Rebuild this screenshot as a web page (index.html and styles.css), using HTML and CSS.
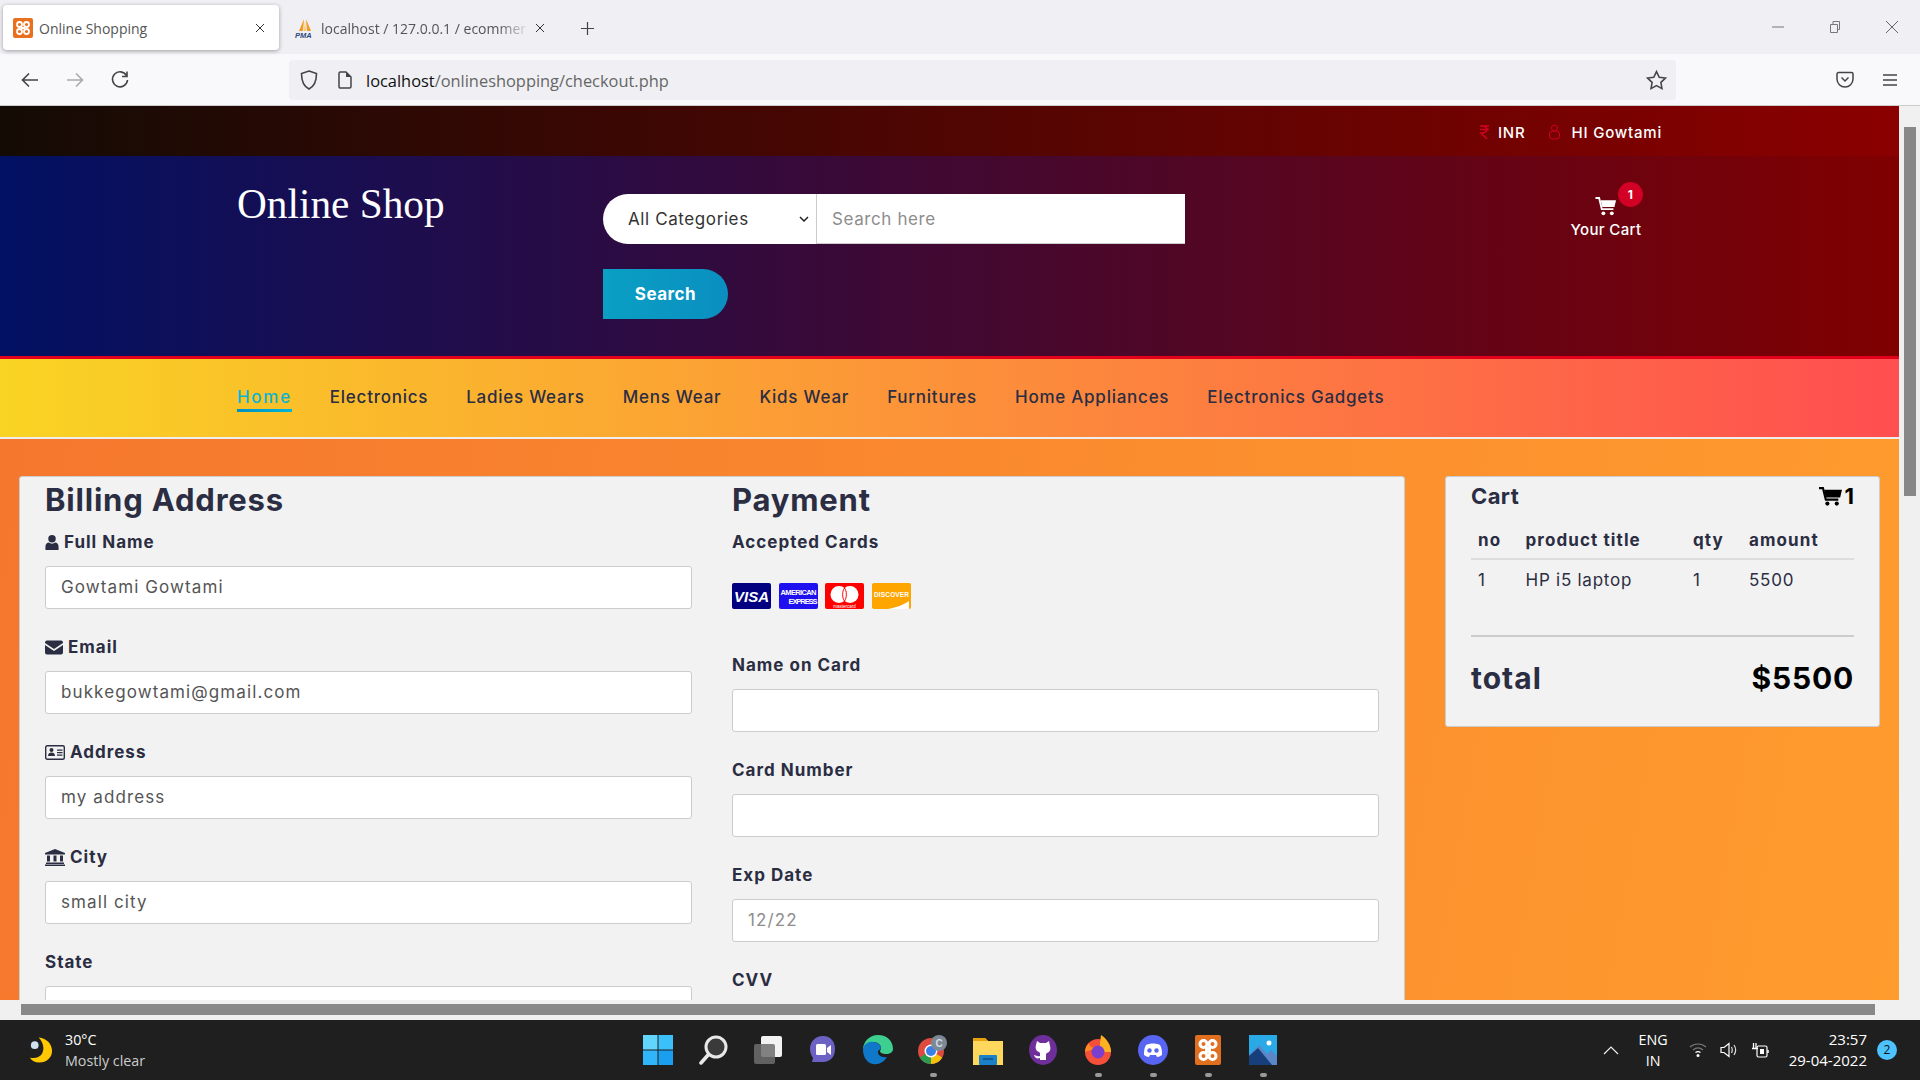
FILE: index.html
```html
<!DOCTYPE html>
<html lang="en">
<head>
  <meta charset="UTF-8">
  <title>Online Shopping</title>
  <link rel="stylesheet" href="styles.css">
</head>
<body>
  <div class="tabstrip">
    <div class="tab tab-active">
      <svg class="favicon" viewBox="0 0 20 20"><rect width="20" height="20" rx="2" fill="#e8701f"/><g fill="none" stroke="#fff" stroke-width="1.800"><circle cx="6.500" cy="6.500" r="2.500"/><circle cx="13.500" cy="6.500" r="2.500"/><circle cx="6.500" cy="13.500" r="2.500"/><circle cx="13.500" cy="13.500" r="2.500"/></g><path d="M8 9h4v2H8z" fill="#fff"/></svg>
      <span class="tab-title">Online Shopping</span>
      <svg class="tab-close" viewBox="0 0 10 10"><path d="M1 1l8 8M9 1l-8 8" stroke="#333" fill="none"/></svg>
    </div>
    <div class="tab tab-other">
      <svg class="favicon" viewBox="0 0 20 20"><path d="M9 1L4 13h4zM11 1l5 12h-4z" fill="#f29a1f"/><path d="M10 3l-1 10h2z" fill="#f7c66b"/><text x="0" y="19.500" font-size="7.500" font-weight="700" font-style="italic" fill="#2b4a80" font-family="Liberation Sans">PMA</text></svg>
      <span class="tab-title tab-fade">localhost / 127.0.0.1 / ecommer</span>
      <svg class="tab-close" viewBox="0 0 10 10"><path d="M1 1l8 8M9 1l-8 8" stroke="#333" fill="none"/></svg>
    </div>
    <svg class="new-tab" viewBox="0 0 16 16"><path d="M8 1v14M1 8h14" stroke="#444" stroke-width="1.300" fill="none"/></svg>
    <div class="window-controls">
      <svg viewBox="0 0 12 12"><path d="M0 6h12" stroke="#777"/></svg>
      <svg viewBox="0 0 12 12"><path d="M1.500 3.500h7v8h-7zM4 3.500V.5h6.500v8H8.500" stroke="#777" fill="none"/></svg>
      <svg viewBox="0 0 12 12"><path d="M0 0l12 12M12 0L0 12" stroke="#666" fill="none"/></svg>
    </div>
  </div>

  <div class="toolbar">
    <svg class="nav-btn" viewBox="0 0 20 20"><path d="M18 10H3M9 3.500L2.500 10 9 16.500" stroke="#444" stroke-width="1.600" fill="none"/></svg>
    <svg class="nav-btn nav-fwd" viewBox="0 0 20 20"><path d="M2 10h15M11 3.500l6.500 6.500-6.500 6.500" stroke="#aaa" stroke-width="1.600" fill="none"/></svg>
    <svg class="nav-btn" viewBox="0 0 20 20"><path d="M16.500 5.500A7.500 7.500 0 1 0 17.500 10M17 1.500V6.500H12" stroke="#444" stroke-width="1.600" fill="none"/></svg>
    <div class="urlbar">
      <svg class="url-shield" viewBox="0 0 18 20"><path d="M9 1l7.500 2.500C16.500 11 15 16 9 19 3 16 1.500 11 1.500 3.500z" stroke="#444" stroke-width="1.600" fill="none"/></svg>
      <svg class="url-doc" viewBox="0 0 14 18"><path d="M2 1h6l5 5v9.500a1.500 1.500 0 0 1-1.500 1.500h-9.500A1.500 1.500 0 0 1 1 15.500V2z" stroke="#444" stroke-width="1.500" fill="none"/><path d="M8 1v5h5" fill="#444"/></svg>
      <span class="url-text"><b>localhost</b>/onlineshopping/checkout.php</span>
      <svg class="url-star" viewBox="0 0 20 20"><path d="M10 1.500l2.600 5.400 5.900.8-4.300 4.100 1 5.900L10 14.900l-5.200 2.800 1-5.900L1.500 7.700l5.900-.8z" stroke="#444" stroke-width="1.500" fill="none"/></svg>
    </div>
    <svg class="tool-pocket" viewBox="0 0 18 18"><path d="M1 3a1.500 1.500 0 0 1 1.500-1.500h13A1.500 1.500 0 0 1 17 3v5a8 8 0 0 1-16 0z" stroke="#444" stroke-width="1.500" fill="none"/><path d="M5.500 6.500L9 10l3.500-3.500" stroke="#444" stroke-width="1.500" fill="none"/></svg>
    <svg class="tool-menu" viewBox="0 0 16 14"><path d="M1 2h14M1 7h14M1 12h14" stroke="#444" stroke-width="1.500"/></svg>
  </div>

  <div class="viewport">
    <div class="page-wrap">
      <div class="page">
        <div class="top-bar">
          <span class="top-link">
            <svg class="top-rupee" viewBox="0 0 9 14"><path d="M0 1h9M0 4.500h9M1 1c5 0 6 2 6 3.500S5 8 1 8l6 6" stroke="#d10024" stroke-width="1.600" fill="none"/></svg>
            INR
          </span>
          <span class="top-link">
            <svg class="top-user" viewBox="0 0 12 16"><circle cx="6" cy="4" r="3" stroke="#d10024" fill="none"/><rect x="1" y="7" width="10" height="8" rx="3" stroke="#d10024" fill="none"/></svg>
            HI Gowtami
          </span>
        </div>

        <header class="header">
          <div class="logo">Online Shop</div>
          <form class="search">
            <div class="search-row">
              <div class="search-select">All Categories
                <svg viewBox="0 0 10 6"><path d="M1 1l4 4 4-4" stroke="#222" stroke-width="1.500" fill="none"/></svg>
              </div>
              <div class="search-input">Search here</div>
            </div>
            <div class="search-btn">Search</div>
          </form>
          <div class="your-cart">
            <svg class="your-cart-icon" viewBox="0 0 20 18"><path d="M0 1h3.500l2.500 10.500h11" stroke="#fff" stroke-width="1.800" fill="none"/><path d="M5 3h14.500l-1.500 6.500H6.500z" fill="#fff"/><circle cx="7.500" cy="15.500" r="1.800" fill="#fff"/><circle cx="15.500" cy="15.500" r="1.800" fill="#fff"/></svg>
            <span class="badge">1</span>
            <div>Your Cart</div>
          </div>
        </header>

        <nav class="nav">
          <a class="nav-item nav-active">Home</a>
          <a class="nav-item">Electronics</a>
          <a class="nav-item">Ladies Wears</a>
          <a class="nav-item">Mens Wear</a>
          <a class="nav-item">Kids Wear</a>
          <a class="nav-item">Furnitures</a>
          <a class="nav-item">Home Appliances</a>
          <a class="nav-item">Electronics Gadgets</a>
        </nav>

        <main class="checkout">
          <section class="card billing">
            <div class="col">
              <h3>Billing Address</h3>
              <div class="field">
                <label><svg class="fa fa-user" viewBox="0 0 14 16"><circle cx="7" cy="4" r="4"/><path d="M0 16v-3.500C0 9.500 2 8 3.500 8c1 .8 2.200 1.200 3.500 1.200S9.500 8.800 10.500 8C12 8 14 9.500 14 12.500V16z"/></svg>Full Name</label>
                <div class="input">Gowtami Gowtami</div>
              </div>
              <div class="field">
                <label><svg class="fa fa-mail" viewBox="0 0 18 14"><path d="M0 2a2 2 0 0 1 2-2h14a2 2 0 0 1 2 2v.5L9 8.500 0 2.500z"/><path d="M0 4.500l9 6 9-6V12a2 2 0 0 1-2 2H2a2 2 0 0 1-2-2z"/></svg>Email</label>
                <div class="input">bukkegowtami@gmail.com</div>
              </div>
              <div class="field">
                <label><svg class="fa fa-wide" viewBox="0 0 20 15"><rect x=".7" y=".7" width="18.600" height="13.600" rx="1.500" fill="none" stroke="#2b2d42" stroke-width="1.400"/><circle cx="6.500" cy="5" r="2"/><path d="M3 11c0-2.500 1.500-3.500 3.500-3.500S10 8.500 10 11zM12 4.500h5.500v1.300H12zM12 7h5.500v1.300H12zM12 9.500h5.500v1.300H12z"/></svg>Address</label>
                <div class="input">my address</div>
              </div>
              <div class="field">
                <label><svg class="fa fa-wide fa-tall" viewBox="0 0 20 17"><path d="M10 0l10 4v1.500H0V4zM2 6.500h3v6H2zM8.500 6.500h3v6h-3zM15 6.500h3v6h-3zM1 13.500h18V15H1zM0 15.500h20V17H0z"/></svg>City</label>
                <div class="input">small city</div>
              </div>
              <div class="field">
                <label>State</label>
                <div class="input"></div>
              </div>
            </div>

            <div class="col">
              <h3>Payment</h3>
              <div class="field field-cards">
                <label>Accepted Cards</label>
                <div class="pay-cards">
                  <svg viewBox="0 0 39 26"><rect width="39" height="26" rx="2" fill="#000080"/><text x="19.500" y="18.500" text-anchor="middle" font-size="15" font-weight="700" font-style="italic" fill="#fff" font-family="Liberation Sans">VISA</text></svg>
                  <svg viewBox="0 0 39 26"><rect width="39" height="26" rx="2" fill="#1f10f0"/><text x="19.500" y="12" text-anchor="middle" font-size="7.500" font-weight="700" fill="#fff" font-family="Liberation Sans" textLength="36">AMERICAN</text><text x="24" y="20.500" text-anchor="middle" font-size="7.500" font-weight="700" fill="#fff" font-family="Liberation Sans" textLength="29">EXPRESS</text></svg>
                  <svg viewBox="0 0 39 26"><rect width="39" height="26" rx="2" fill="#f00"/><circle cx="14" cy="11.500" r="8.500" fill="#fff"/><circle cx="25" cy="11.500" r="8.500" fill="#fff"/><path d="M19.500 5c2.500 3 2.500 10 0 13-2.500-3-2.500-10 0-13z" fill="none" stroke="#f00"/><text x="19.500" y="24.500" text-anchor="middle" font-size="4.500" fill="#fff" font-family="Liberation Sans">mastercard</text></svg>
                  <svg viewBox="0 0 39 26"><rect width="39" height="26" rx="2" fill="#ffa500"/><path d="M16 26c10-2 17-5 21-8v8z" fill="#fff"/><text x="19.500" y="14" text-anchor="middle" font-size="6.500" fill="#fff" font-weight="700" font-family="Liberation Sans" textLength="35">DISCOVER</text></svg>
                </div>
              </div>
              <div class="field">
                <label>Name on Card</label>
                <div class="input"></div>
              </div>
              <div class="field">
                <label>Card Number</label>
                <div class="input"></div>
              </div>
              <div class="field">
                <label>Exp Date</label>
                <div class="input input-hint">12/22</div>
              </div>
              <div class="field">
                <label>CVV</label>
                <div class="input"></div>
              </div>
            </div>
          </section>

          <aside class="card cart">
            <div class="cart-head">
              <h4>Cart</h4>
              <span class="cart-count">
                <svg viewBox="0 0 22 18"><path d="M0 1h3.800l2.700 11h12" stroke="#000" stroke-width="2" fill="none"/><path d="M5 2.500h17l-1.800 7.500H6.500z"/><circle cx="8" cy="15.800" r="2"/><circle cx="17" cy="15.800" r="2"/></svg>
                1
              </span>
            </div>
            <table class="cart-table">
              <thead>
                <tr><th class="c-no">no</th><th class="c-title">product title</th><th class="c-qty">qty</th><th>amount</th></tr>
              </thead>
              <tbody>
                <tr><td>1</td><td>HP i5 laptop</td><td>1</td><td>5500</td></tr>
              </tbody>
            </table>
            <div class="cart-total">
              <span>total</span>
              <b>$5500</b>
            </div>
          </aside>
        </main>
      </div>
      <div class="hscroll"><div class="hthumb"></div></div>
    </div>
    <div class="vscroll"><div class="vthumb"></div></div>
  </div>

  <footer class="taskbar">
    <div class="weather">
      <svg viewBox="0 0 26 28"><path d="M11 1c9 1 14 7 14 14 0 7-6 12-13 12-5 0-8-2-10-5 9 2 14-3 14-10 0-4-2-8-5-11z" fill="#ffc800"/><circle cx="7" cy="9" r="4" fill="#cfe0ee"/></svg>
      <div class="two-line"><span>30°C</span><span class="dim">Mostly clear</span></div>
    </div>
    <div class="task-icons">
      <span class="task-icon"><svg viewBox="0 0 30 30"><path d="M0 0h14.500v14.500H0z" fill="#62d5fd"/><path d="M15.500 0H30v14.500H15.500z" fill="#3cc0fa"/><path d="M0 15.500h14.500V30H0z" fill="#30b5f8"/><path d="M15.500 15.500H30V30H15.500z" fill="#1a9ff0"/></svg></span>
      <span class="task-icon"><svg viewBox="0 0 30 30"><circle cx="18" cy="12" r="10" fill="#3a3a3a" stroke="#e8e8e8" stroke-width="3"/><path d="M10 20l-7 8" stroke="#e8e8e8" stroke-width="3.500" stroke-linecap="round"/></svg></span>
      <span class="task-icon"><svg viewBox="0 0 30 30"><rect x="8" y="1" width="21" height="21" rx="2" fill="#f2f2f2"/><rect x="1" y="9" width="21" height="20" rx="2" fill="#6d6d6d" fill-opacity=".85"/></svg></span>
      <span class="task-icon"><svg viewBox="0 0 30 30"><path d="M15 1c8 0 12 6 12 13 0 8-5 13-12 13H4l1-4c-2-3-3-6-3-9C2 7 7 1 15 1z" fill="#6b62c4"/><rect x="8" y="9" width="10" height="11" rx="1.500" fill="#fff"/><path d="M19 13l4-3v10l-4-3z" fill="#fff"/></svg></span>
      <span class="task-icon"><svg viewBox="0 0 30 30"><path d="M15 0c9 0 15 6 15 14 0 3-3 5-7 5-3 0-6-1-6-3 0-1 1-1 1-3 0-3-3-6-8-6C5 7 1 11 0 15 0 7 6 0 15 0z" fill="#3dcf8f"/><path d="M0 15c0-5 5-9 10-8 4 0 8 3 8 6 0 1-2 2-3 3-1 4 4 7 9 6-3 5-8 8-14 7C4 28 0 22 0 15z" fill="#0f78c8"/></svg></span>
      <span class="task-icon task-open"><svg viewBox="0 0 30 30"><circle cx="13" cy="16" r="13" fill="#dd4b3e"/><path d="M13 16L24.300 22.500A13 13 0 0 1 13 29z" fill="#f4c20d"/><path d="M13 16v13A13 13 0 0 1 1.700 22.500z" fill="#2a9d4e"/><circle cx="13" cy="16" r="6.500" fill="#fff"/><circle cx="13" cy="16" r="5" fill="#3a7fe8"/><circle cx="21" cy="8" r="8" fill="#7b8a96"/><text x="21" y="11.500" text-anchor="middle" font-size="10" font-weight="700" fill="#d5dde2" font-family="Liberation Sans">C</text></svg></span>
      <span class="task-icon"><svg viewBox="0 0 30 30"><path d="M0 3h12l3 3h15v24H0z" fill="#ffd75c"/><path d="M0 3h12l3 3H0z" fill="#e8a30c"/><rect x="6" y="20" width="18" height="10" rx="1" fill="#1a80c8"/><path d="M10 24h10" stroke="#0b4d80" stroke-width="1.500"/></svg></span>
      <span class="task-icon"><svg viewBox="0 0 30 30"><ellipse cx="15" cy="15" rx="14" ry="15" fill="#6e2f9b"/><path d="M9 6l3 2h6l3-2 1 5c1 3 0 6-3 7l-1 1v6h-6v-2c-3 1-5 0-6-3 2 0 3 2 6 1v-3l-1-1c-3-1-4-4-3-7z" fill="#fff"/></svg></span>
      <span class="task-icon task-open"><svg viewBox="0 0 30 30"><circle cx="15" cy="17" r="13" fill="#f4503a"/><path d="M18 0c6 4 10 10 10 17H16z" fill="#ffb11f"/><path d="M2 17c0-4 2-7 4-9 0 4 4 5 8 5z" fill="#ff8a1f"/><circle cx="15" cy="17" r="6.500" fill="#7b3fd0"/></svg></span>
      <span class="task-icon task-open"><svg viewBox="0 0 30 30"><circle cx="15" cy="15" r="15" fill="#5865f2"/><path d="M8 10c4-2 10-2 14 0 2 3 2 7 2 10-2 1-3 2-5 2l-1-2H12l-1 2c-2 0-3-1-5-2 0-3 0-7 2-10z" fill="#fff"/><circle cx="11.500" cy="15.500" r="2.200" fill="#5865f2"/><circle cx="18.500" cy="15.500" r="2.200" fill="#5865f2"/></svg></span>
      <span class="task-icon task-open"><svg viewBox="0 0 30 30"><rect x="2" width="26" height="30" rx="2" fill="#e0701f"/><g fill="none" stroke="#fff" stroke-width="3"><circle cx="10.500" cy="9" r="3.500"/><circle cx="19.500" cy="9" r="3.500"/><circle cx="10.500" cy="21" r="3.500"/><circle cx="19.500" cy="21" r="3.500"/></g><path d="M12 12h6v6h-6z" fill="#fff"/></svg></span>
      <span class="task-icon task-open"><svg viewBox="0 0 30 30"><rect x="1" width="28" height="30" fill="#29a9e6"/><path d="M1 30V20l10-10 8 9 4-4 6 6v9z" fill="#5b86c8"/><path d="M1 30V21l9-8 14 17z" fill="#163f7c"/><circle cx="21" cy="8" r="2.500" fill="#fff"/></svg></span>
    </div>
    <div class="tray">
      <svg class="tray-chevron" viewBox="0 0 16 10"><path d="M1 9l7-7 7 7" stroke="#eee" stroke-width="1.200" fill="none"/></svg>
      <div class="two-line lang"><span>ENG</span><span>IN</span></div>
      <svg class="tray-icon" viewBox="0 0 18 16"><path d="M1 5c4.500-4 11.500-4 16 0M4 8c3-2.500 7-2.500 10 0" stroke="#777" stroke-width="1.200" fill="none"/><path d="M6.500 10.500c1.500-1 3.500-1 5 0" stroke="#fff" stroke-width="1.300" fill="none"/><circle cx="9" cy="13.500" r="1.500" fill="#fff"/></svg>
      <svg class="tray-icon" viewBox="0 0 18 16"><path d="M1 5.500h3l5-4v13l-5-4H1z" stroke="#fff" stroke-width="1.200" fill="none"/><path d="M11.500 5c1 2 1 4 0 6M14 3c2 3 2 7 0 10" stroke="#ddd" stroke-width="1.200" fill="none"/></svg>
      <svg class="tray-icon" viewBox="0 0 18 16"><rect x="6" y="4" width="10" height="11" rx="1.500" stroke="#fff" stroke-width="1.200" fill="none"/><path d="M9 7h4v5H9z" fill="#fff"/><path d="M17 8v3" stroke="#fff" stroke-width="1.500"/><path d="M1 6.500h6M2.500 1v5M5 1v5" stroke="#fff" stroke-width="1.300" fill="none"/></svg>
      <div class="two-line clock"><span>23:57</span><span>29-04-2022</span></div>
      <span class="notif">2</span>
    </div>
  </footer>
</body>
</html>
```

FILE: styles.css
```css
* {
  box-sizing: border-box;
}

body {
  margin: 0;
  width: 1920px;
  height: 1080px;
  overflow: hidden;
  font-family: "Inter", "Liberation Sans", sans-serif;
  color: #2b2d42;
  background: #f0f0f0;
}

/* browser chrome */
.tabstrip {
  height: 54px;
  background: #f0f0f4;
  display: flex;
  align-items: flex-start;
  font-family: "Open Sans", sans-serif;
  font-size: 14px;
  color: #555;
}

.tab {
  display: flex;
  align-items: center;
  height: 45px;
  margin-top: 5px;
  padding-top: 1px;
}

.tab-active {
  width: 276px;
  margin-left: 3px;
  padding-left: 10px;
  padding-right: 14px;
  background: #fff;
  border-radius: 4px;
  box-shadow: 0 1px 4px rgba(0, 0, 0, .35);
}

.tab-other {
  width: 266px;
  padding-left: 16px;
}

.favicon {
  width: 20px;
  height: 20px;
  flex: none;
  margin-right: 6px;
}

.tab-title {
  flex: 1;
  white-space: nowrap;
}

.tab-fade {
  -webkit-mask-image: linear-gradient(to right, #000 85%, transparent);
  mask-image: linear-gradient(to right, #000 85%, transparent);
}

.tab-close {
  width: 10px;
  height: 10px;
  flex: none;
  margin-left: 5px;
}

.new-tab {
  width: 15px;
  height: 15px;
  margin: 21px 0 0 35px;
}

.window-controls {
  margin-left: auto;
  display: flex;
  gap: 45px;
  padding: 21px 22px 0 0;
}

.window-controls svg {
  width: 12px;
  height: 12px;
}

.toolbar {
  height: 52px;
  background: #f9f9fb;
  border-bottom: 1px solid #ccc;
  display: flex;
  align-items: center;
  padding: 1px 22px 0 20px;
}

.nav-btn {
  width: 20px;
  height: 20px;
  margin-right: 25px;
  flex: none;
}

.urlbar {
  height: 40px;
  width: 1387px;
  margin-left: 134px;
  margin-right: 160px;
  background: #f0f0f4;
  border-radius: 4px;
  display: flex;
  align-items: center;
  padding: 0 9px 0 11px;
  flex: none;
}

.url-shield {
  width: 18px;
  height: 20px;
  margin-right: 20px;
}

.url-doc {
  width: 14px;
  height: 18px;
  margin-right: 14px;
}

.url-text {
  flex: 1;
  font-family: "Open Sans", sans-serif;
  font-size: 16.400px;
  color: #666;
}

.url-text b {
  font-weight: 400;
  color: #111;
}

.url-star {
  width: 21px;
  height: 21px;
}

.tool-pocket {
  width: 18px;
  height: 18px;
  margin-right: 28px;
  flex: none;
}

.tool-menu {
  width: 16px;
  height: 14px;
  flex: none;
}

.viewport {
  height: 914px;
  display: flex;
}

.page-wrap {
  width: 1899px;
  flex: none;
}

.page {
  height: 894px;
  overflow: hidden;
  background: linear-gradient(100deg, #f5762e, #ff9c2e);
}

.hscroll {
  height: 20px;
  padding: 4px 24px 5px 21px;
}

.hthumb,
.vthumb {
  background: #888;
  height: 100%;
}

.vscroll {
  width: 21px;
  padding: 21px 4px 0 5px;
}

.vthumb {
  height: 369px;
}

/* site header */
.top-bar {
  height: 50px;
  padding-top: 2px;
  background: linear-gradient(to right, #140b05, #8b0000);
  color: #fff;
  font-size: 15px;
  font-weight: 500;
  display: flex;
  align-items: center;
  justify-content: flex-end;
  gap: 23px;
  padding-right: 237px;
}

.top-link {
  display: flex;
  align-items: center;
  letter-spacing: .8px;
}

.top-rupee {
  width: 9px;
  height: 14px;
  margin-right: 9px;
}

.top-user {
  width: 13px;
  height: 16px;
  margin-right: 10px;
}

.header {
  height: 203px;
  background: linear-gradient(to right, #021163, #800000);
  border-bottom: 3px solid #e2001a;
  padding: 0 0 0 237px;
  display: flex;
  align-items: flex-start;
}

.logo {
  width: 366px;
  margin-top: 24px;
  font-family: "Liberation Serif", serif;
  font-size: 41.300px;
  line-height: 48px;
  color: #fff;
}

.search {
  width: 582px;
  margin-top: 38px;
}

.search-row {
  display: flex;
  height: 50px;
}

.search-select {
  width: 213px;
  height: 50px;
  background: #fff;
  border-radius: 40px 0 0 40px;
  display: flex;
  align-items: center;
  justify-content: space-between;
  padding: 0 7px 0 25px;
  font-size: 17px;
  color: #333;
  letter-spacing: .6px;
}

.search-select svg {
  width: 10px;
  height: 6px;
}

.search-input {
  width: 369px;
  height: 50px;
  background: #fff;
  border-left: 1px solid #ccc;
  border-bottom: 1px solid #ccc;
  display: flex;
  align-items: center;
  padding-left: 15px;
  font-size: 17px;
  color: #8d8d8d;
  letter-spacing: .6px;
}

.search-btn {
  margin-top: 25px;
  width: 125px;
  height: 50px;
  background: linear-gradient(to right, #0a9fc4, #0a8fc0);
  border-radius: 0 40px 40px 0;
  color: #fff;
  font-size: 17px;
  font-weight: 700;
  letter-spacing: .5px;
  display: flex;
  align-items: center;
  justify-content: center;
}

.your-cart {
  position: relative;
  width: 100px;
  margin: 41px 0 0 371px;
  text-align: center;
  color: #fff;
  font-size: 15px;
  font-weight: 500;
  letter-spacing: .35px;
}

.your-cart-icon {
  display: block;
  width: 22px;
  height: 19px;
  margin: 0 auto 4px;
}

.badge {
  position: absolute;
  left: 62px;
  top: -15px;
  width: 25px;
  height: 25px;
  border-radius: 50%;
  background: #d10024;
  font-size: 12px;
  font-weight: 700;
  line-height: 25px;
}

/* nav strip */
.nav {
  height: 80px;
  background: linear-gradient(to right, #f9d423, #ff4e50);
  border-bottom: 2px solid #eee;
  padding: 25px 0 0 237px;
  display: flex;
  gap: 38px;
  font-size: 17px;
  font-weight: 500;
  letter-spacing: .75px;
}

.nav-item {
  height: 28px;
  line-height: 26px;
  color: #2b2d42;
}

.nav-active {
  color: #0ab4d0;
  letter-spacing: 1.700px;
  border-bottom: 3px solid #0aa3c9;
  border-image: linear-gradient(to right, #0090c0, #00b5d8) 1;
}

/* checkout */
.checkout {
  padding: 37px 19px 0;
  display: flex;
  gap: 40px;
  align-items: flex-start;
}

.card {
  background: #f2f2f2;
  border: 1px solid #ccc;
  border-radius: 3px;
}

.billing {
  width: 1386px;
  flex: none;
  display: flex;
  gap: 40px;
  padding: 0 25px;
}

.col {
  width: 647px;
}

h3 {
  margin: 3px 0 10px;
  font-size: 31px;
  font-weight: 700;
  line-height: 40px;
  letter-spacing: .8px;
}

.field {
  margin-bottom: 26px;
}

.field label {
  display: flex;
  align-items: center;
  gap: 5px;
  height: 24px;
  margin-bottom: 12px;
  font-size: 17px;
  font-weight: 700;
  letter-spacing: 1px;
}

.fa {
  height: 15px;
  fill: #2b2d42;
  flex: none;
}

.fa-user {
  width: 14px;
}

.fa-mail {
  width: 18px;
}

.fa-wide {
  width: 20px;
}

.fa-tall {
  height: 17px;
}

.input {
  height: 43px;
  background: #fff;
  border: 1px solid #ccc;
  border-radius: 3px;
  padding: 0 15px;
  line-height: 41px;
  font-size: 17px;
  letter-spacing: 1.100px;
  color: #555;
}

.input-hint {
  color: #8d8d8d;
}

.field-cards {
  margin-bottom: 0;
}

.field-cards label {
  margin-bottom: 29px;
}

.pay-cards {
  display: flex;
  gap: 7.500px;
  height: 26px;
  margin-bottom: 44px;
}

.pay-cards svg {
  width: 39px;
  height: 26px;
}

.cart {
  width: 435px;
  height: 251px;
  flex: none;
  padding: 0 25px;
}

.cart-head {
  display: flex;
  justify-content: space-between;
  align-items: center;
  height: 38px;
}

h4 {
  margin: 0;
  font-size: 22px;
  font-weight: 700;
  letter-spacing: .4px;
}

.cart-count {
  display: flex;
  align-items: center;
  gap: 3px;
  color: #000;
  font-size: 22px;
  font-weight: 700;
}

.cart-count svg {
  width: 23px;
  height: 19px;
}

.cart-table {
  width: 100%;
  table-layout: fixed;
  border-collapse: collapse;
  font-size: 17px;
  margin-top: 7px;
}

.cart-table th {
  height: 37px;
  padding: 0 0 0 7px;
  text-align: left;
  font-weight: 700;
  letter-spacing: 1.100px;
  border-bottom: 2px solid #ddd;
  white-space: nowrap;
}

.cart-table td {
  height: 41px;
  padding: 0 0 0 7px;
  letter-spacing: .75px;
}

.c-no {
  width: 47.500px;
}

.c-title {
  width: 167.500px;
}

.c-qty {
  width: 56px;
}

.cart-total {
  margin-top: 35px;
  border-top: 2px solid #ccc;
  display: flex;
  justify-content: space-between;
  align-items: center;
  height: 84px;
  font-size: 30px;
  font-weight: 700;
  letter-spacing: 1px;
}

.cart-total b {
  color: #000;
  font-weight: 700;
  letter-spacing: .8px;
}

/* windows taskbar */
.taskbar {
  height: 60px;
  background: #1f1f1f;
  display: flex;
  align-items: center;
  position: relative;
  font-family: "Open Sans", sans-serif;
  font-size: 14.300px;
  color: #fff;
}

.weather {
  display: flex;
  align-items: center;
  gap: 12px;
  padding-left: 28px;
  width: 643px;
}

.weather svg {
  width: 25px;
  height: 28px;
}

.two-line {
  display: flex;
  flex-direction: column;
  gap: 2px;
  line-height: 19px;
}

.dim {
  color: #ccc;
}

.task-icons {
  display: flex;
  gap: 25px;
}

.task-icon {
  position: relative;
  width: 30px;
  height: 30px;
}

.task-icon svg {
  width: 30px;
  height: 30px;
  display: block;
}

.task-open::after {
  content: "";
  position: absolute;
  left: 12px;
  bottom: -12px;
  width: 7px;
  height: 4px;
  border-radius: 2px;
  background: #999;
}

.tray {
  margin-left: auto;
  display: flex;
  align-items: center;
  padding-right: 23px;
}

.tray-chevron {
  width: 16px;
  height: 10px;
  margin-right: 20px;
}

.lang {
  align-items: center;
  margin-right: 21px;
}

.tray-icon {
  width: 18px;
  height: 16px;
  margin-right: 13px;
}

.clock {
  align-items: flex-end;
  margin-left: 7px;
  font-size: 15px;
}

.notif {
  width: 20px;
  height: 20px;
  margin-left: 10px;
  border-radius: 50%;
  background: #4cc2ff;
  color: #111;
  font-size: 12px;
  line-height: 20px;
  text-align: center;
}
```
